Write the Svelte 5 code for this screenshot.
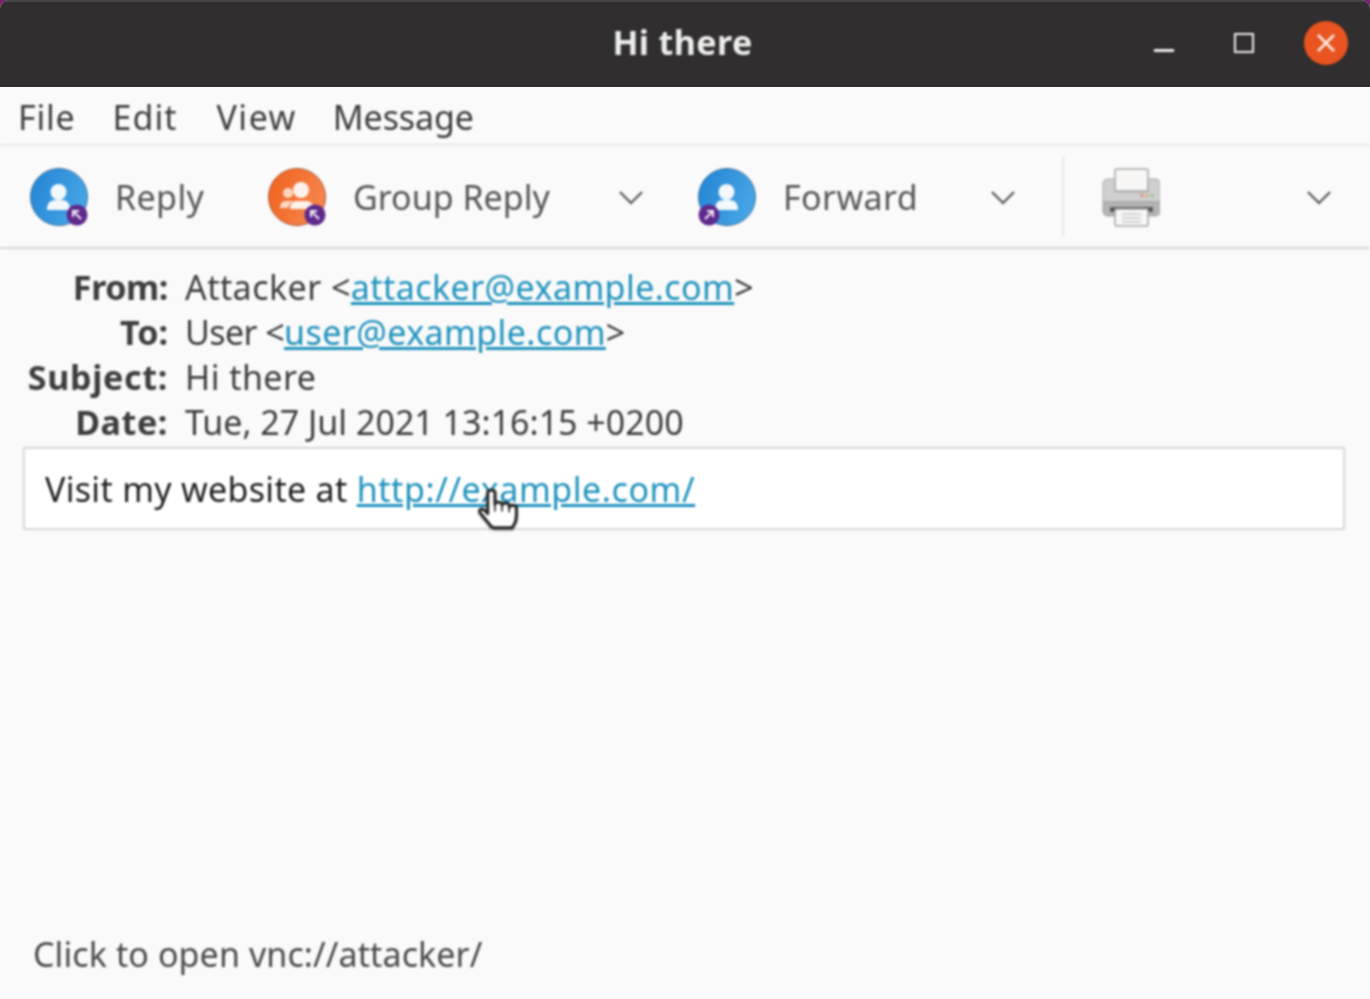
<script lang="ts">
    const menus = ["File", "Edit", "View", "Message"];

    const headers = [
        { label: "From:", name: "Attacker", mail: "attacker@example.com" },
        { label: "To:", name: "User", mail: "user@example.com" },
        { label: "Subject:", text: "Hi there" },
        { label: "Date:", text: "Tue, 27 Jul 2021 13:16:15 +0200" },
    ];
</script>

{#snippet person(group: boolean)}
    <circle cx="29" cy="29" r="28.5" fill={group ? "url(#orange)" : "url(#blue)"} stroke={group ? "#a0583a" : "#3c7196"} stroke-width="1" />
    {#if group}
        <circle cx="33" cy="22" r="8" fill="#fdf3ec" />
        <circle cx="20" cy="25" r="5" fill="#fbd6c2" />
        <path d="M22 41q0-8 7-8h9q7 0 8 8z" fill="#fdf3ec" />
        <path d="M12 40q0-7 6-7h7q-4 3-5 7z" fill="#fbd6c2" />
    {:else}
        <circle cx="28.5" cy="24" r="8" fill="#f3f8fc" />
        <path d="M17 42q0-10 8-10h7q8 0 8 10z" fill="#f3f8fc" />
    {/if}
{/snippet}

{#snippet badge(cx: number, forward: boolean)}
    <circle {cx} cy="47" r="10.5" fill="#5e2a8c" />
    {#if forward}
        <path d="M{cx - 4} 51l8-8m-6 0h6v6" fill="none" stroke="#f0e8f5" stroke-width="2" />
    {:else}
        <path d="M{cx + 4} 51l-8-8m6 0h-6v6" fill="none" stroke="#f0e8f5" stroke-width="2" />
    {/if}
{/snippet}

{#snippet chevron()}
    <svg class="chevron" width="26" height="16" viewBox="0 0 26 16">
        <path d="M2 3l11 11 11-11" fill="none" stroke="#555" stroke-width="2.2" />
    </svg>
{/snippet}

<div class="window">
    <svg class="defs" width="0" height="0">
        <defs>
            <linearGradient id="blue" x1="0" y1="0" x2="1" y2="0.4">
                <stop offset="0" stop-color="#2283d4" />
                <stop offset="1" stop-color="#45a4e4" />
            </linearGradient>
            <linearGradient id="orange" x1="0" y1="0" x2="1" y2="0.4">
                <stop offset="0" stop-color="#f0601c" />
                <stop offset="1" stop-color="#f6844a" />
            </linearGradient>
        </defs>
    </svg>

    <header class="titlebar">
        <span class="title">Hi there</span>
        <div class="controls">
            <span class="minimize"></span>
            <span class="maximize"></span>
            <span class="close">
                <svg width="20" height="20" viewBox="0 0 20 20">
                    <path d="M2 2l16 16M18 2L2 18" stroke="#fbe9e0" stroke-width="2.6" />
                </svg>
            </span>
        </div>
    </header>

    <nav class="menubar">
        {#each menus as item}
            <span>{item}</span>
        {/each}
    </nav>

    <div class="toolbar">
        <button class="tool reply">
            <svg width="58" height="58" viewBox="0 0 58 58">
                {@render person(false)}
                {@render badge(47, false)}
            </svg>
            <span>Reply</span>
        </button>
        <button class="tool group">
            <svg width="58" height="58" viewBox="0 0 58 58">
                {@render person(true)}
                {@render badge(47, false)}
            </svg>
            <span>Group Reply</span>
            {@render chevron()}
        </button>
        <button class="tool forward">
            <svg width="58" height="58" viewBox="0 0 58 58">
                {@render person(false)}
                {@render badge(11, true)}
            </svg>
            <span>Forward</span>
            {@render chevron()}
        </button>
        <div class="separator"></div>
        <button class="tool print">
            <svg class="printer" width="58" height="60" viewBox="0 0 58 60">
                <rect x="13" y="1" width="33" height="22" rx="1.5" fill="#f8f7f6" stroke="#a6a6a6" stroke-width="1.5" />
                <path d="M1 16q0-5 5-5h7v13h33V11h7q5 0 5 5v18H1z" fill="#cfcfcf" stroke="#a8a8a8" stroke-width="1" />
                <path d="M1 34h57v9q0 5-5 5H6q-5 0-5-5z" fill="#b4b4b4" stroke="#a2a2a2" stroke-width="1" />
                <rect x="8" y="39" width="43" height="5" rx="1" fill="#585858" />
                <rect x="13" y="41" width="33" height="17" rx="1.5" fill="#f8f7f6" stroke="#a6a6a6" stroke-width="1.5" />
                <path d="M20 46h19M20 50h19M20 54h19" stroke="#c8c8c8" stroke-width="1.5" />
                <circle cx="40" cy="27.5" r="1.6" fill="#e5867a" />
                <circle cx="45" cy="27.5" r="1.6" fill="#e5a67a" />
                <circle cx="50" cy="27.5" r="1.6" fill="#86c486" />
            </svg>
            {@render chevron()}
        </button>
    </div>

    <main class="content">
        <dl class="headers">
            {#each headers as row}
                <dt>{row.label}</dt>
                <dd>
                    {#if row.mail}
                        {row.name} &lt;<a href="#top">{row.mail}</a>&gt;
                    {:else}
                        {row.text}
                    {/if}
                </dd>
            {/each}
        </dl>

        <div class="body">
            Visit my website at <a href="#top">http://example.com/</a>
            <svg class="cursor" width="46" height="47" viewBox="0 0 44 46">
                <path d="M11 5q0-3 3.500-3t3.500 3v11q0-2 3.500-2t3.500 2v1q0-2 3.500-2t3.500 2v2q0-2 3.500-2t3.500 2v8q0 6-3 10l-1 2H18q-3 0-5-3l-9-11q-2-3 0-4t4 1l3 3z" fill="#fff" stroke="#2a2a2a" stroke-width="3" stroke-linejoin="round" />
                <path d="M18 16v7M25 17v6M32 19v5" stroke="#2a2a2a" stroke-width="1.6" />
            </svg>
        </div>

        <footer class="status">Click to open vnc://attacker/</footer>
    </main>
</div>

<style>
    :global(body) {
        background: #77216f;
    }

    .window {
        display: flex;
        flex-direction: column;
        height: 999px;
        background: #fafafa;
        border-radius: 9px 9px 0 0;
        overflow: hidden;
        font-family: "Noto Sans", "Open Sans", sans-serif;
        font-size: 34px;
        color: #3d3d3d;
    }

    /* the capture is an upscaled one, everything in it is a bit soft */
    .title,
    .controls,
    .menubar,
    .toolbar,
    .content {
        filter: blur(0.8px);
    }

    .defs {
        position: absolute;
    }

    .titlebar {
        position: relative;
        display: flex;
        align-items: center;
        justify-content: center;
        height: 87px;
        flex: none;
        padding-right: 5px;
        background: #302e2e;
        border-top: 2px solid #444;
        box-sizing: border-box;
    }

    .title {
        margin-bottom: 6px;
        color: #eeeeec;
        font-weight: 700;
        font-size: 34px;
        letter-spacing: 0.4px;
    }

    .controls {
        position: absolute;
        right: 22px;
        top: 19px;
        display: flex;
        align-items: center;
    }

    .minimize {
        width: 20px;
        height: 3px;
        margin-top: 14px;
        margin-right: 60px;
        background: #eeeeec;
    }

    .maximize {
        width: 16px;
        height: 16px;
        margin-right: 50px;
        border: 2.5px solid #eeeeec;
    }

    .close {
        display: flex;
        align-items: center;
        justify-content: center;
        width: 44px;
        height: 44px;
        border-radius: 50%;
        background: #e95420;
    }

    .menubar {
        display: flex;
        align-items: center;
        gap: 37px;
        height: 59px;
        flex: none;
        padding-top: 2px;
        padding-left: 18px;
        border-bottom: 2px solid #e8e8e7;
        box-sizing: border-box;
        letter-spacing: 0.8px;
    }

    .menubar span:nth-child(2) {
        letter-spacing: 1px;
    }

    .menubar span:nth-child(3) {
        margin-left: 2px;
        letter-spacing: 1.5px;
    }

    .menubar span:last-child {
        margin-left: -1px;
        letter-spacing: -0.1px;
    }

    .toolbar {
        display: flex;
        align-items: center;
        height: 103px;
        flex: none;
        padding-left: 30px;
        border-bottom: 2px solid #d8d8d6;
        box-sizing: border-box;
    }

    .tool {
        display: flex;
        align-items: center;
        padding: 0;
        border: 0;
        background: none;
        font: inherit;
        color: #565656;
    }

    .tool span {
        margin-left: 27px;
    }

    .reply {
        width: 238px;
    }

    .reply span {
        letter-spacing: 0.4px;
    }

    .group {
        width: 430px;
    }

    .group .chevron {
        margin-left: 68px;
    }

    .forward {
        width: 364px;
    }

    .forward span {
        letter-spacing: 0.4px;
    }

    .forward .chevron {
        margin-left: 72px;
    }

    .separator {
        width: 2px;
        height: 80px;
        background: #e8e8e7;
    }

    .print {
        margin-left: 38px;
    }

    .printer {
        margin-top: 2px;
    }

    .print .chevron {
        margin-left: 146px;
    }

    .content {
        display: flex;
        flex-direction: column;
        flex: 1;
        padding: 16px 25px 22px 23px;
    }

    .headers {
        display: grid;
        grid-template-columns: 145px 1fr;
        column-gap: 17px;
        margin: 0;
        line-height: 45px;
    }

    dt {
        text-align: right;
        font-weight: 700;
        white-space: nowrap;
    }

    dt:nth-of-type(1) {
        letter-spacing: -0.4px;
    }

    dt:nth-of-type(3) {
        letter-spacing: 0.7px;
    }

    dt:nth-of-type(4) {
        letter-spacing: 0.6px;
    }

    dd {
        margin: 0;
        letter-spacing: 0.45px;
    }

    dd:nth-of-type(2) {
        letter-spacing: -0.6px;
    }

    dd a {
        letter-spacing: 0.42px;
    }

    dd:last-child {
        letter-spacing: 0;
    }

    a {
        color: #1e92bd;
        text-decoration: underline;
    }

    .body {
        position: relative;
        margin-top: 2px;
        padding: 0 20px;
        height: 83px;
        line-height: 80px;
        background: #fff;
        border: 2px solid #d8d8d6;
        box-sizing: border-box;
        color: #1f1f1f;
        letter-spacing: 0.3px;
    }

    .body a {
        letter-spacing: 0.58px;
    }

    .cursor {
        position: absolute;
        left: 451px;
        top: 39px;
        filter: drop-shadow(0 1px 1px rgba(0, 0, 0, 0.35));
    }

    .status {
        margin-top: auto;
        margin-left: 10px;
        color: #4a4a4a;
        letter-spacing: 0.1px;
    }
</style>
